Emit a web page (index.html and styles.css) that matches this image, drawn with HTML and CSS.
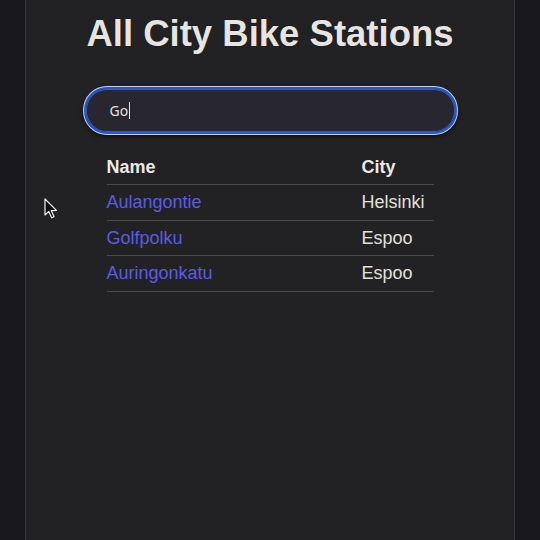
FILE: index.html
```html
<!DOCTYPE html>
<html lang="en">
<head>
<meta charset="utf-8">
<title>All City Bike Stations</title>
<link rel="stylesheet" href="styles.css">
</head>
<body>
<main class="panel">
  <h1 class="title">All City Bike Stations</h1>
  <div class="search" role="textbox" aria-label="Search stations"><span class="search-text">Go</span><span class="caret"></span></div>
  <table class="stations">
    <thead>
      <tr><th class="col-name">Name</th><th class="col-city">City</th></tr>
    </thead>
    <tbody>
      <tr><td><a href="#">Aulangontie</a></td><td>Helsinki</td></tr>
      <tr><td><a href="#">Golfpolku</a></td><td>Espoo</td></tr>
      <tr><td><a href="#">Auringonkatu</a></td><td>Espoo</td></tr>
    </tbody>
  </table>
</main>
<svg class="pointer" width="14" height="22" viewBox="0 0 14 22" aria-hidden="true">
  <path d="M1 1 L1 17 L4.8 13.4 L7.6 19.8 L10 18.8 L7.3 12.6 L12.4 12.4 Z" fill="#111" stroke="#f2f2f2" stroke-width="1.2" stroke-linejoin="round"/>
</svg>
</body>
</html>
```
FILE: styles.css
```css
html, body {
  margin: 0;
  padding: 0;
  height: 100%;
}
body {
  background: #18171c;
  font-family: "Liberation Sans", Arial, sans-serif;
  overflow: hidden;
}
.panel {
  box-sizing: border-box;
  width: 490px;
  min-height: 100%;
  margin-left: 25px;
  background: #222124;
  border-left: 1px solid #38373b;
  border-right: 1px solid #38373b;
  display: flex;
  flex-direction: column;
  align-items: center;
  padding-top: 13px;
}
.title {
  margin: 0;
  font-size: 36.5px;
  font-weight: bold;
  color: #e7e5e2;
  line-height: 42px;
  text-shadow: 0 0 1px #000;
}
.search {
  box-sizing: border-box;
  margin-top: 32px;
  width: 373px;
  height: 47px;
  border-radius: 23px;
  border: 2px solid #1c58dc;
  background: #28262e;
  box-shadow: 0 0 0 1px #d0d0d8, 0 2px 5px rgba(0, 0, 0, 0.8), inset 0 0 0 1px #3a5cae;
  display: flex;
  align-items: center;
  padding-left: 24px;
  font-family: "Noto Sans", "Open Sans", sans-serif;
  font-size: 14px;
  color: #e2e2e4;
}
.caret {
  display: inline-block;
  width: 1px;
  height: 17px;
  background: #e6e6e6;
  margin-left: 1px;
}
.stations {
  margin-top: 16px;
  width: 327px;
  border-collapse: collapse;
  font-size: 18px;
  color: #e2e0dd;
}
.stations th,
.stations td {
  text-align: left;
  padding: 7px 0;
  line-height: 20.4px;
  border-bottom: 1px solid #4a494d;
}
.stations th {
  font-weight: bold;
  color: #ebe9e6;
}
.col-name {
  width: 255px;
}
.stations a {
  color: #5c5be4;
  text-decoration: none;
}
.pointer {
  position: absolute;
  left: 44px;
  top: 198px;
}
```
